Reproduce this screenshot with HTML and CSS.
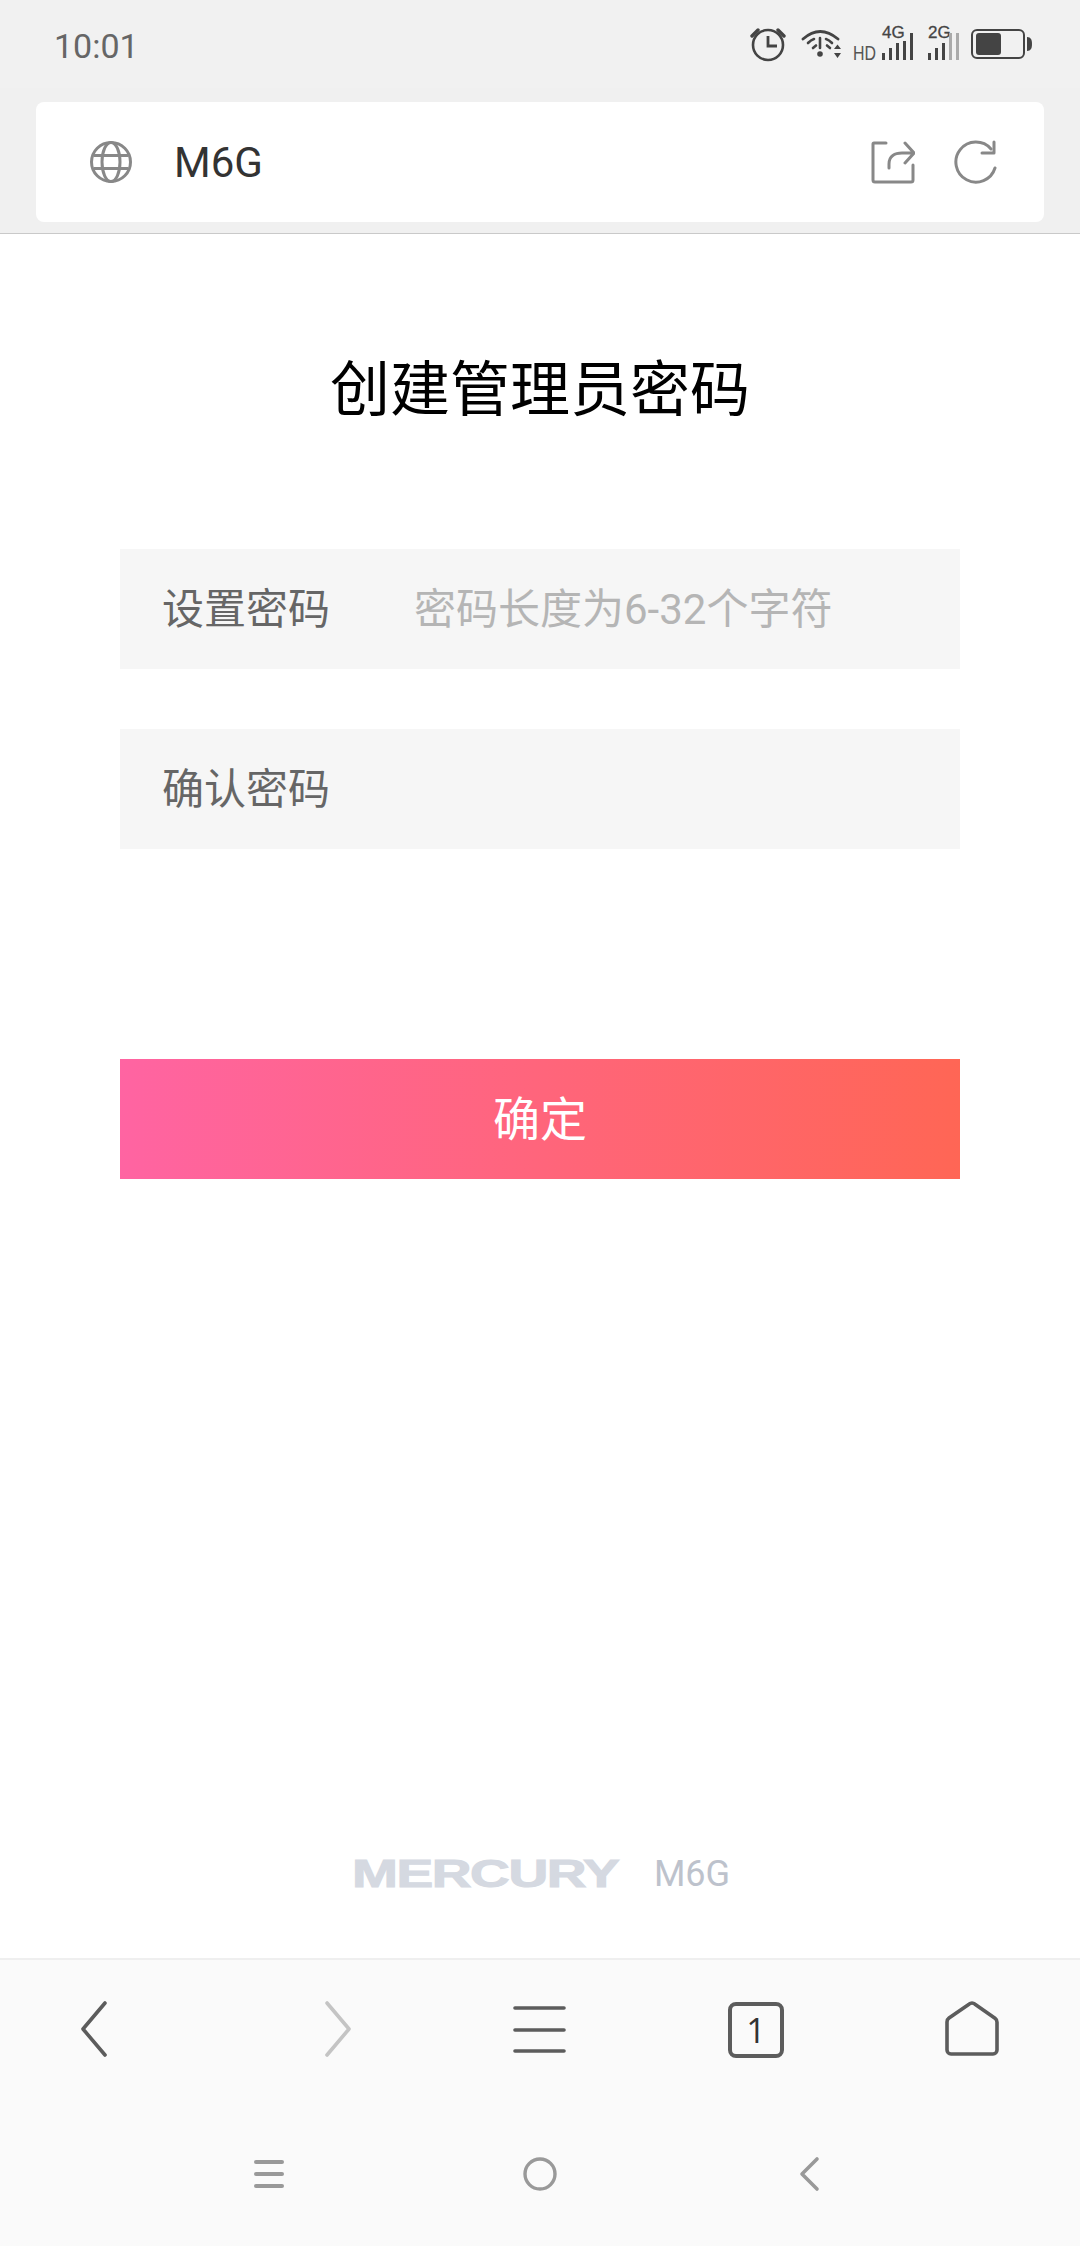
FILE: index.html
```html
<!DOCTYPE html>
<html lang="zh">
<head>
<meta charset="utf-8">
<title>创建管理员密码</title>
<link rel="stylesheet" href="styles.css">
</head>
<body>
<div class="page">
  <header class="chrome">
    <div class="status">
      <span class="time">10:01</span>
      <svg class="status-icons" width="284" height="44" viewBox="750 24 284 44">
        <g fill="none" stroke="#444" stroke-width="2.6">
          <circle cx="768" cy="46" r="15"/>
          <path d="M768 37v10h9" stroke-width="2.8"/>
          <path d="M752 37l6-6M778 31l6 6" stroke-width="3.4" stroke-linecap="round"/>
          <path d="M803 40Q820 25 838 40" stroke-width="2.800" stroke-linecap="round"/>
          <path d="M808 44Q811 41 814 40M826 40Q829 41 832 44M813 49l3-2.500M827 46.500l3 2.500M820 39v10" stroke-width="2.600" stroke-linecap="round"/>
        </g>
        <circle cx="820" cy="55" r="2.800" fill="#444"/>
        <path d="M834 50l3.500-4.500 3.500 4.500zM834 54h7l-3.500 5z" fill="#444"/>
        <text x="853" y="61" class="s-hd" textLength="23" lengthAdjust="spacingAndGlyphs">HD</text>
        <text x="882" y="39" class="s-net">4G</text>
        <text x="928" y="39" class="s-net">2G</text>
        <g fill="#444">
          <rect x="882" y="54" width="3" height="7"/><rect x="889" y="49" width="3" height="12"/><rect x="896" y="44" width="3" height="17"/><rect x="903" y="42" width="3" height="19"/><rect x="910" y="34" width="3" height="27"/>
          <rect x="928" y="54" width="3" height="7"/><rect x="935" y="49" width="3" height="12"/><rect x="942" y="44" width="3" height="17"/>
          <rect x="949" y="34" width="3" height="27" fill="#aaa"/><rect x="956" y="34" width="3" height="27" fill="#aaa"/>
          <rect x="976" y="34" width="25" height="22" rx="3"/>
          <path d="M1027 38c4 0 5 3 5 7s-1 7-5 7z"/>
        </g>
        <rect x="972" y="31" width="52" height="28" rx="5" fill="none" stroke="#444" stroke-width="2"/>
      </svg>
    </div>
    <div class="urlbar">
      <div class="url-left">
        <svg width="44" height="44" viewBox="0 0 44 44" fill="none" stroke="#888" stroke-width="3">
          <circle cx="22" cy="22" r="19.500"/>
          <ellipse cx="22" cy="22" rx="9" ry="19.500"/>
          <path d="M5 15.500h34M5 28.500h34"/>
        </svg>
        <span class="url-text">M6G</span>
      </div>
      <div class="url-right">
        <svg width="44" height="44" viewBox="0 0 44 44" fill="none" stroke="#888" stroke-width="3" stroke-linecap="round" stroke-linejoin="round">
          <path d="M15 3H3a1 1 0 0 0-1 1v36a2 2 0 0 0 2 2h36a2 2 0 0 0 2-2V25"/>
          <path d="M18 28v-4c0-8 6-11 13-11h11M34 3l9 10-9 10"/>
        </svg>
        <svg width="44" height="44" viewBox="0 0 44 44" fill="none" stroke="#888" stroke-width="3" stroke-linecap="round" stroke-linejoin="round">
          <path d="M41 28A20 20 0 1 1 37 9"/>
          <path d="M40 2v11H28"/>
        </svg>
      </div>
    </div>
  </header>

  <main class="content">
    <h1 class="title">创建管理员密码</h1>
    <div class="field"><span class="label">设置密码</span><span class="placeholder">密码长度为6-32个字符</span></div>
    <div class="field field-second"><span class="label">确认密码</span></div>
    <div class="submit">确定</div>
    <footer class="brand">
      <span class="logo"><span class="logo-text">MERCURY</span></span>
      <span class="model">M6G</span>
    </footer>
  </main>

  <nav class="bottom">
    <div class="toolbar">
      <svg width="56" height="60" viewBox="0 0 56 60" fill="none" stroke="#5c5c5c" stroke-width="3.600" stroke-linecap="round" stroke-linejoin="round"><path d="M25 3L3 29l22 26"/></svg>
      <svg width="56" height="60" viewBox="0 0 56 60" fill="none" stroke="#c4c4c4" stroke-width="3.600" stroke-linecap="round" stroke-linejoin="round"><path d="M31 3l22 26-22 26"/></svg>
      <svg width="56" height="60" viewBox="0 0 56 60" fill="none" stroke="#5c5c5c" stroke-width="3.600" stroke-linecap="round"><path d="M3 8h49M3 30h49M3 51h49"/></svg>
      <div class="tabs">1</div>
      <svg width="56" height="60" viewBox="0 0 56 60" fill="none" stroke="#5c5c5c" stroke-width="3.600" stroke-linejoin="round"><path d="M28 3c1 0 2 .4 3 1.200l20 14c1 .7 2 2 2 4V50a4 4 0 0 1-4 4H7a4 4 0 0 1-4-4V22c0-2 1-3.300 2-4L25 4.200c1-.8 2-1.200 3-1.200z"/></svg>
    </div>
    <div class="sysnav">
      <svg width="40" height="40" viewBox="0 0 40 40" fill="none" stroke="#999" stroke-width="4" stroke-linecap="round"><path d="M6 8h26M6 20h26M6 32h26"/></svg>
      <svg width="40" height="40" viewBox="0 0 40 40" fill="none" stroke="#999" stroke-width="3.400"><circle cx="20" cy="20" r="15"/></svg>
      <svg width="40" height="40" viewBox="0 0 40 40" fill="none" stroke="#999" stroke-width="3.600" stroke-linecap="round" stroke-linejoin="round"><path d="M27 5L12 20l15 15"/></svg>
    </div>
  </nav>
</div>
</body>
</html>
```

FILE: styles.css
```css
* { box-sizing: border-box; }
html, body { margin: 0; padding: 0; }
body { background: #fff; font-family: Roboto, "Noto Sans CJK SC", sans-serif; }
.page { width: 1080px; height: 2246px; display: flex; flex-direction: column; overflow: hidden; }

.chrome { height: 234px; background: #f0f0f0; border-bottom: 1px solid #c9c9c9; flex: none; }
.status { height: 88px; padding-left: 54px; padding-right: 46px; display: flex; align-items: center; justify-content: space-between; background: #f1f1f1; }
.time { font-size: 34px; color: #666; line-height: 1; margin-top: 4px; }
.status-icons { display: block; margin-top: 2px; }
.s-hd { font: 21px "Liberation Sans", sans-serif; fill: #555; }
.s-net { font: 17px "Liberation Sans", sans-serif; fill: #444; stroke: #444; stroke-width: 0.3px; }

.urlbar { height: 120px; margin: 14px 36px 0; background: #fff; border-radius: 8px; display: flex; align-items: center; justify-content: space-between; padding: 0 46px 0 53px; }
.url-left { display: flex; align-items: center; gap: 41px; }
.url-left svg { display: block; }
.url-text { font-size: 42px; color: #333; line-height: 1; margin-top: 2px; }
.url-right { display: flex; gap: 39px; }
.url-right svg { display: block; }

.content { flex: 1; display: flex; flex-direction: column; align-items: center; padding: 117px 120px 64px; }
.title { margin: 0 0 118px; font-size: 60px; line-height: 80px; font-weight: 400; color: #000; text-align: center; }
.field { width: 840px; height: 120px; flex: none; background: #f6f6f6; display: flex; align-items: center; padding: 0 0 8px 42px; font-size: 42px; }
.field-second { margin-top: 60px; }
.label { width: 252px; color: #666; flex: none; }
.placeholder { color: #b5b5b5; }
.submit { width: 840px; height: 120px; flex: none; margin-top: 210px; padding-bottom: 7px; background: linear-gradient(90deg, #ff64a2, #ff6655); color: #fff; font-size: 47px; display: flex; align-items: center; justify-content: center; }

.brand { margin-top: auto; display: flex; align-items: center; gap: 36px; margin-left: 2px; height: 40px; }
.logo { width: 266px; height: 40px; display: flex; align-items: center; }
.logo-text { display: block; font: 700 38px/40px "Liberation Sans", sans-serif; color: #d5d9e1; -webkit-text-stroke: 1px #d5d9e1; transform: scaleX(1.45); transform-origin: left center; letter-spacing: -1px; white-space: nowrap; }
.model { font-size: 36px; color: #bdc2cc; line-height: 1; }

.bottom { height: 288px; flex: none; background: #fafafa; border-top: 2px solid #efefef; }
.toolbar { height: 144px; display: grid; grid-template-columns: repeat(5, 216px); justify-items: center; padding-top: 40px; align-items: start; }
.toolbar svg { display: block; }
.tabs { width: 56px; height: 56px; margin-top: 2px; border: 4px solid #5c5c5c; border-radius: 8px; display: flex; align-items: center; justify-content: center; font: 34px/1 "Open Sans", sans-serif; color: #333; background: none; }
.sysnav { display: grid; grid-template-columns: repeat(3, 270px); justify-items: center; padding: 50px 135px 0; }
.sysnav svg { display: block; }
```
